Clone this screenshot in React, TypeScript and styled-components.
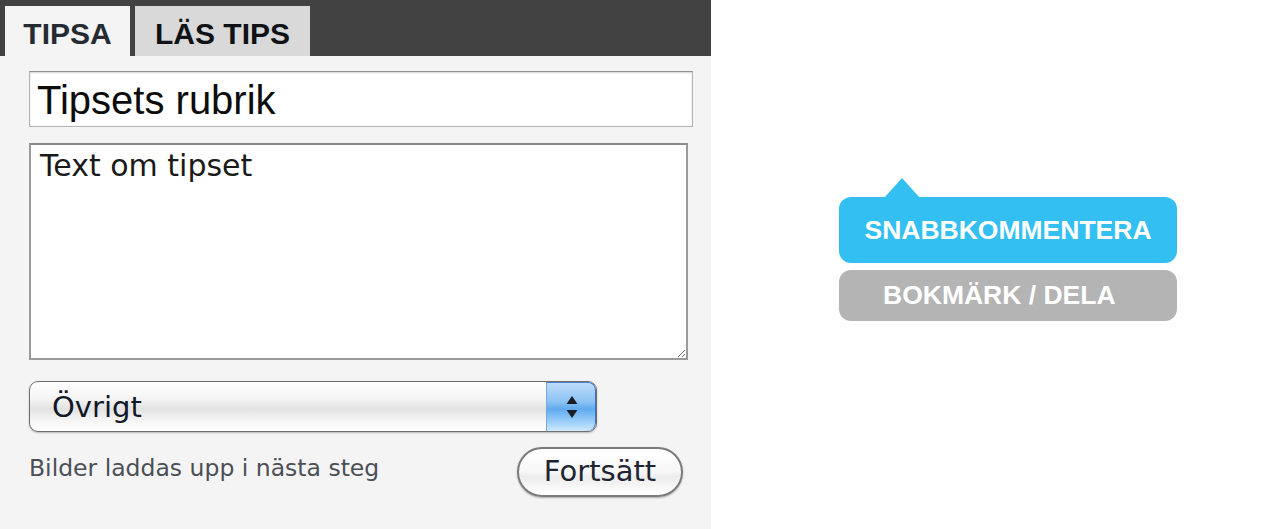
import React from "react";
import styled, { createGlobalStyle } from "styled-components";

const Global = createGlobalStyle`
  html, body { margin: 0; padding: 0; background: #ffffff; }
  body { font-family: "Liberation Sans", Arial, sans-serif; }
  * { box-sizing: border-box; }
`;

const Page = styled.div`
  display: flex;
  width: 1280px;
  height: 529px;
  overflow: hidden;
`;

const Panel = styled.div`
  width: 711px;
  height: 529px;
  background: #f4f4f4;
  display: flex;
  flex-direction: column;
`;

const TabBar = styled.div`
  height: 56px;
  background: #424242;
  display: flex;
  align-items: flex-end;
  gap: 5px;
  padding-left: 5px;
`;

const Tab = styled.div<{ $active?: boolean; $w: number }>`
  width: ${(p) => p.$w}px;
  height: 50px;
  background: ${(p) => (p.$active ? "#f4f4f4" : "#d9d9d9")};
  color: ${(p) => (p.$active ? "#262b33" : "#101216")};
  font-family: "Liberation Sans", Arial, sans-serif;
  font-weight: 700;
  font-size: 30px;
  display: flex;
  align-items: center;
  justify-content: center;
  padding-top: 6px;
`;

const Form = styled.div`
  display: flex;
  flex-direction: column;
  padding: 15px 0 0 29px;
`;

const TitleInput = styled.input`
  width: 664px;
  height: 56px;
  border: 1px solid #b4b4b4;
  border-top-color: #8e8e8e;
  box-shadow: inset 0 1px 2px rgba(0, 0, 0, 0.18);
  background: #fff;
  font-family: "Liberation Sans", Arial, sans-serif;
  font-size: 40px;
  color: #0c0c0c;
  padding: 2px 7px 0;
  outline: none;
`;

const BodyArea = styled.textarea`
  margin-top: 16px;
  width: 659px;
  height: 217px;
  border: 2px solid #9a9a9a;
  border-top-color: #8a8a8a;
  background: #fff;
  font-family: "DejaVu Sans", Verdana, sans-serif;
  font-size: 30px;
  color: #1a1a1a;
  padding: 2px 9px;
  line-height: 38px;
  outline: none;
`;

const SelectBox = styled.div`
  margin-top: 21px;
  width: 568px;
  height: 51px;
  border: 1px solid #6f6f6f;
  border-radius: 9px;
  display: flex;
  overflow: hidden;
  box-shadow: 0 1px 2px rgba(0, 0, 0, 0.25);
  background: linear-gradient(#ffffff 0%, #f4f4f4 35%, #e2e2e2 55%, #f6f6f6 80%, #ffffff 100%);
`;

const SelectLabel = styled.div`
  flex: 1;
  display: flex;
  align-items: center;
  padding-left: 22px;
  font-family: "DejaVu Sans", Verdana, sans-serif;
  font-size: 29px;
  color: #111827;
`;

const SelectArrow = styled.div`
  width: 50px;
  display: flex;
  align-items: center;
  justify-content: center;
  border-left: 1px solid #7aa6d8;
  background: linear-gradient(#bfdcf8 0%, #8dc3f4 40%, #5faaf0 55%, #a6d4fa 85%, #cfeafd 100%);
  border-radius: 0 8px 8px 0;
  box-shadow: inset -1px 0 0 #3a6fc4, inset 0 1px 0 #4f7fd0;
`;

const BottomRow = styled.div`
  margin-top: 15px;
  width: 654px;
  display: flex;
  align-items: center;
  justify-content: space-between;
`;

const Helper = styled.div`
  font-family: "DejaVu Sans", Verdana, sans-serif;
  font-size: 23.5px;
  color: #4b4f55;
  margin-top: -8px;
`;

const PillButton = styled.button`
  width: 166px;
  height: 50px;
  border-radius: 25px;
  border: 2px solid #7a7a7a;
  background: linear-gradient(#ffffff 0%, #f7f7f7 50%, #ececec 60%, #ffffff 100%);
  box-shadow: 0 1px 2px rgba(0, 0, 0, 0.3);
  font-family: "DejaVu Sans", Verdana, sans-serif;
  font-size: 29px;
  color: #1f2430;
  padding: 0 0 2px;
  cursor: pointer;
`;

const Side = styled.div`
  flex: 1;
  display: flex;
  flex-direction: column;
  align-items: flex-start;
  padding: 197px 0 0 128px;
`;

const Actions = styled.div`
  width: 338px;
  display: flex;
  flex-direction: column;
  gap: 7px;
`;

const ActionButton = styled.div<{ $tone: "blue" | "gray"; $h: number; $notch?: boolean }>`
  position: relative;
  height: ${(p) => p.$h}px;
  border-radius: 12px;
  background: ${(p) => (p.$tone === "blue" ? "#33bff1" : "#b4b4b4")};
  color: #ffffff;
  font-family: "Liberation Sans", Arial, sans-serif;
  font-weight: 700;
  font-size: 26.5px;
  display: flex;
  align-items: center;
  justify-content: ${(p) => (p.$tone === "blue" ? "center" : "flex-start")};
  padding-left: ${(p) => (p.$tone === "blue" ? "0" : "44px")};
  &::before {
    content: "";
    display: ${(p) => (p.$notch ? "block" : "none")};
    position: absolute;
    top: -19px;
    left: 45px;
    width: 0;
    height: 0;
    border-left: 18px solid transparent;
    border-right: 18px solid transparent;
    border-bottom: 20px solid #33bff1;
  }
`;

export default function App() {
  return (
    <>
      <Global />
      <Page>
        <Panel>
          <TabBar>
            <Tab $active $w={125}>TIPSA</Tab>
            <Tab $w={175}>LÄS TIPS</Tab>
          </TabBar>
          <Form>
            <TitleInput defaultValue="Tipsets rubrik" />
            <BodyArea defaultValue="Text om tipset" />
            <SelectBox>
              <SelectLabel>Övrigt</SelectLabel>
              <SelectArrow>
                <svg width="14" height="26" viewBox="0 0 14 26">
                  <path d="M7 2 L12.5 10 L1.5 10 Z" fill="#1b1d22" />
                  <path d="M7 24 L12.5 16 L1.5 16 Z" fill="#1b1d22" />
                </svg>
              </SelectArrow>
            </SelectBox>
            <BottomRow>
              <Helper>Bilder laddas upp i nästa steg</Helper>
              <PillButton>Fortsätt</PillButton>
            </BottomRow>
          </Form>
        </Panel>
        <Side>
          <Actions>
            <ActionButton $tone="blue" $h={66} $notch>SNABBKOMMENTERA</ActionButton>
            <ActionButton $tone="gray" $h={51}>BOKMÄRK / DELA</ActionButton>
          </Actions>
        </Side>
      </Page>
    </>
  );
}
